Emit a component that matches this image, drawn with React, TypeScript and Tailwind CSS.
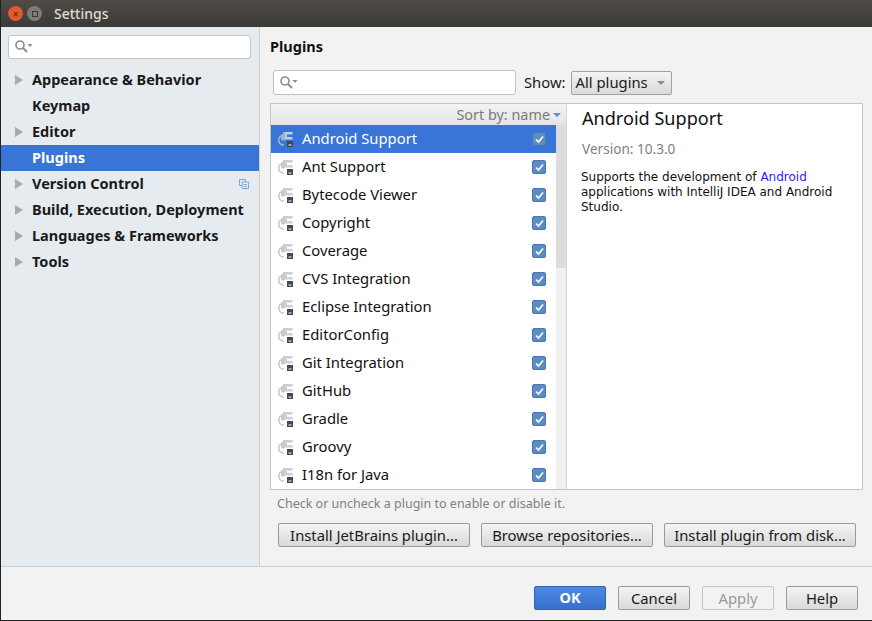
const ui = "font-['Noto_Sans',sans-serif]";

const sections = [
  { name: "Appearance & Behavior", arrow: true },
  { name: "Keymap" },
  { name: "Editor", arrow: true },
  { name: "Plugins", selected: true },
  { name: "Version Control", arrow: true, badge: true },
  { name: "Build, Execution, Deployment", arrow: true },
  { name: "Languages & Frameworks", arrow: true },
  { name: "Tools", arrow: true },
];

const plugins = [
  "Android Support",
  "Ant Support",
  "Bytecode Viewer",
  "Copyright",
  "Coverage",
  "CVS Integration",
  "Eclipse Integration",
  "EditorConfig",
  "Git Integration",
  "GitHub",
  "Gradle",
  "Groovy",
  "I18n for Java",
];

function SearchIcon() {
  return (
    <svg width="20" height="16" viewBox="0 0 20 16" className="shrink-0">
      <circle cx="6" cy="6" r="4" fill="none" stroke="#8c8c8c" strokeWidth="1.6" />
      <path d="M9 9l4 4" stroke="#8c8c8c" strokeWidth="2" />
      <path d="M13.5 5h5l-2.5 3z" fill="#8c8c8c" />
    </svg>
  );
}

function PluginIcon({ selected }: { selected?: boolean }) {
  const arc = selected ? "#9db3d2" : "#c3cbd0";
  const prong = selected ? "#c2cfe2" : "#cfcfcf";
  return (
    <svg width="16" height="16" viewBox="0 0 16 16" className="shrink-0">
      <path d="M6 4C2.5 4 .8 6.2.8 9s1.7 5 5.2 5" fill="none" stroke={arc} strokeWidth="1.6" />
      <path d="M5 2.5C3.5 3 3 4 3 5.5V9l2 .5h2V1H5z" fill={arc} />
      <path d="M7 1h7.5v2.5H7zM7 6h7.5v2.5H7z" fill={prong} />
      <path d="M7 3.5h2V6H7z" fill={prong} />
      <path d="M9 10h6v6H9z" fill="#45494a" />
      <path d="M10.5 13.5h3v1h-3z" fill="#fff" />
    </svg>
  );
}

function Check() {
  return (
    <span className="flex h-[14px] w-[14px] items-center justify-center rounded-[2px] border border-[#4a77ad] bg-[#5b8cc6]">
      <svg width="11" height="11" viewBox="0 0 11 11">
        <path d="M2 5.5l2.5 2.5L9 2.5" fill="none" stroke="#fff" strokeWidth="1.7" />
      </svg>
    </span>
  );
}

function Btn({ label, w }: { label: string; w: string }) {
  return (
    <button className={`flex h-6 items-center justify-center rounded-[2px] border border-[#9a9a9a] bg-gradient-to-b from-[#f4f4f4] to-[#d9d9d9] text-[14.8px] text-[#1a1a1a] ${w}`}>
      {label}
    </button>
  );
}

export default function App() {
  return (
    <div className={`flex h-[621px] w-[872px] flex-col overflow-hidden border-b border-l border-[#222] bg-[#f2f2f2] ${ui}`}>
      {/* Title bar */}
      <div className="flex h-[27px] shrink-0 items-center bg-gradient-to-b from-[#4f4c47] to-[#3b3a36] pl-[7px]">
        <span className="flex h-[15px] w-[15px] items-center justify-center rounded-full bg-[#e2592b] text-[10px] leading-none text-[#4a2010]">×</span>
        <span className="ml-[4px] flex h-[15px] w-[15px] items-center justify-center rounded-full bg-[#7d7c77]">
          <span className="h-[6px] w-[6px] border border-[#3b3a36]" />
        </span>
        <span className="ml-[12px] text-[14px] font-medium text-[#dfdbd2]">Settings</span>
      </div>

      {/* Body */}
      <div className="flex h-[540px] shrink-0 border-b border-[#cfcfcf]">
        {/* Sidebar */}
        <div className="w-[259px] shrink-0 border-r border-[#d0d0d0] bg-[#e6ebf0]">
          <div className="ml-[7px] mr-[7px] mt-2 flex h-[24px] w-[243px] items-center rounded-[3px] border border-[#c4c4c4] bg-white pl-[5px]">
            <SearchIcon />
          </div>
          <div className="mt-2">
            {sections.map((s) => (
              <div
                key={s.name}
                className={`flex h-[26px] items-center text-[14.5px] font-bold ${s.selected ? "bg-[#3875d7] text-white" : "text-[#1a1a1a]"}`}
              >
                <span className="flex w-[31px] justify-center">
                  {s.arrow && (
                    <svg width="8" height="10" viewBox="0 0 8 10" className="ml-[5px]">
                      <path d="M0 0l8 5-8 5z" fill="#a9a9a9" />
                    </svg>
                  )}
                </span>
                <span className="flex-1">{s.name}</span>
                {s.badge && (
                  <svg width="10" height="10" viewBox="0 0 10 10" className="mr-[10px]">
                    <path d="M.5.5h6v6h-6z" fill="none" stroke="#7fa8cc" />
                    <path d="M3 3h6.5v6.5H3z" fill="#e6ebf0" stroke="#7fa8cc" />
                    <path d="M4.5 5.5h3.5M4.5 7.5h3.5" stroke="#7fa8cc" />
                  </svg>
                )}
              </div>
            ))}
          </div>
        </div>

        {/* Content */}
        <div className="flex-1 pl-[10px] pr-[9px]">
          <div className="mt-[9px] text-[14.5px] font-bold leading-5 text-[#111]">Plugins</div>

          <div className="mt-[14px] flex items-center pl-[3px]">
            <div className="flex h-[25px] w-[243px] items-center rounded-[3px] border border-[#c0c0c0] bg-white pl-[5px]">
              <SearchIcon />
            </div>
            <span className="ml-2 text-[14.8px] text-[#1a1a1a]">Show:</span>
            <button className="ml-[5px] flex h-6 w-[101px] items-center rounded-[2px] border border-[#a0a0a0] bg-gradient-to-b from-[#f4f4f4] to-[#dadada] pl-[4px] text-[14.8px] text-[#1a1a1a]">
              All plugins
              <svg width="8" height="4" viewBox="0 0 8 4" className="ml-[9px]">
                <path d="M0 0h8L4 4z" fill="#8c8c8c" />
              </svg>
            </button>
          </div>

          <div className="mt-[8px] flex h-[387px] border border-[#c4c4c4]">
            <div className="flex w-[295px] shrink-0 flex-col">
              <div className="flex h-[21px] shrink-0 items-center justify-end bg-gradient-to-b from-[#f4f4f4] to-[#e4e4e4] pr-[5px] text-[14.4px] text-[#7a7a7a]">
                Sort by: name
                <svg width="8" height="4" viewBox="0 0 8 4" className="ml-[3px]">
                  <path d="M0 0h8L4 4z" fill="#5b8cc6" />
                </svg>
              </div>
              <div className="flex min-h-0 flex-1 overflow-hidden">
                <div className="w-[285px] shrink-0 bg-white">
                  {plugins.map((p, i) => (
                    <div key={p} className={`flex h-[28px] items-center text-[14.8px] ${i === 0 ? "bg-[#3875d7] text-white" : "text-[#111]"}`}>
                      <span className="ml-[7px] w-[24px]"><PluginIcon selected={i === 0} /></span>
                      <span className="-mt-[2px] flex-1">{p}</span>
                      <span className="mr-[10px]"><Check /></span>
                    </div>
                  ))}
                </div>
                <div className="flex-1 bg-[#f0f0f0]">
                  <div className="h-[143px] bg-[#dcdcdc]" />
                </div>
              </div>
            </div>
            <div className="flex-1 border-l border-[#d8d8d8] bg-white pl-[15px] pr-2">
              <div className="mt-[2px] text-[18.1px] leading-[24px] text-[#111]">Android Support</div>
              <div className="mt-[9px] text-[13.6px] leading-5 text-[#808080]">Version: 10.3.0</div>
              <p className="-ml-px mt-[11px] font-['DejaVu_Sans',sans-serif] text-[12px] leading-[15px] text-[#111]">
                Supports the development of <span className="text-[#2a1aff]">Android</span> applications with IntelliJ IDEA and Android Studio.
              </p>
            </div>
          </div>

          <div className="mt-[4px] pl-[7px] text-[12.5px] leading-5 text-[#808080]">Check or uncheck a plugin to enable or disable it.</div>

          <div className="mt-[9px] flex gap-[11px] pl-[8px]">
            <Btn label="Install JetBrains plugin..." w="w-[192px]" />
            <Btn label="Browse repositories..." w="w-[172px]" />
            <Btn label="Install plugin from disk..." w="w-[192px]" />
          </div>
        </div>
      </div>

      {/* Footer */}
      <div className="flex flex-1 items-start justify-end gap-3 pr-[14px] pt-[19px]">
        <button className="flex h-6 w-[72px] items-center justify-center rounded-[2px] border border-[#2f63b0] bg-gradient-to-b from-[#4d8ae4] to-[#3670cc] text-[14.5px] font-bold text-white">OK</button>
        <Btn label="Cancel" w="w-[72px]" />
        <button className="flex h-6 w-[72px] items-center justify-center rounded-[2px] border border-[#c4c4c4] bg-[#f2f2f2] text-[14.8px] text-[#9a9a9a]">Apply</button>
        <Btn label="Help" w="w-[72px]" />
      </div>
    </div>
  );
}
